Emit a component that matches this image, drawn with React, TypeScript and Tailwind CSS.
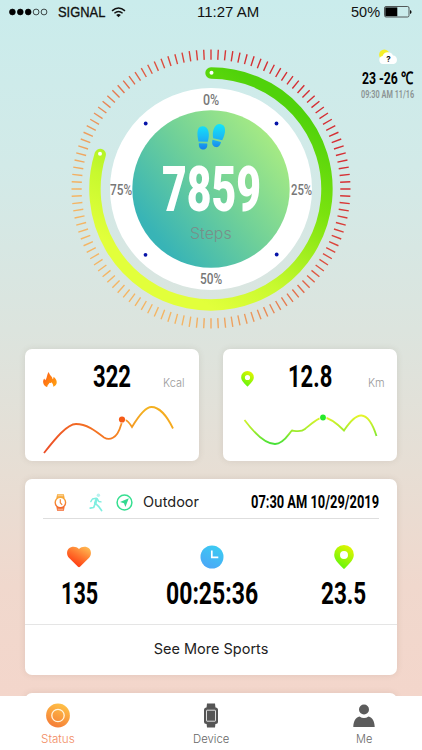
import { useLayoutEffect, useRef } from "react";
import type { ReactNode } from "react";

/** One line of text squeezed or stretched horizontally to a given width. */
function Fit({ width, className = "", children }: { width: number; className?: string; children: ReactNode }) {
  const ref = useRef<HTMLSpanElement>(null);
  useLayoutEffect(() => {
    const el = ref.current;
    if (el) el.style.transform = `scaleX(${width / el.offsetWidth})`;
  });
  return (
    <span className={`block leading-none whitespace-nowrap ${className}`} style={{ width }}>
      <span ref={ref} className="inline-block origin-left">
        {children}
      </span>
    </span>
  );
}

const din = "font-['Roboto',sans-serif]";
const sans = "font-['Inter',sans-serif]";

function StatusBar() {
  return (
    <header className="grid h-6 grid-cols-3 items-center pr-[10px] pl-[9px] font-['Liberation_Sans',sans-serif] text-[#111]">
      <div className="flex items-center">
        <svg width="39" height="8" viewBox="0 0 39 8" stroke="#000" strokeWidth="0.7">
          {[0, 1, 2, 3, 4].map((i) => (
            <circle key={i} cx={3.4 + i * 7.9} cy="4" r="2.9" fill={i < 3 ? "#000" : "none"} />
          ))}
        </svg>
        <Fit width={47} className="ml-[10px] text-[14px] [-webkit-text-stroke:0.3px]">SIGNAL</Fit>
        <svg className="ml-[6px]" width="15" height="11" viewBox="0 0 15 11" fill="none" stroke="#111" strokeWidth="1.4">
          <path d="M1 3.9Q7.5 -1.8 14 3.9" />
          <path d="M3.4 6.2Q7.5 2.7 11.6 6.2" />
          <path d="M5.2 8Q7.5 6 9.8 8L7.5 10.2Z" fill="#111" stroke="none" />
        </svg>
      </div>
      <div className="flex justify-center">
        <Fit width={62} className="ml-[36px] text-[14px]">11:27 AM</Fit>
      </div>
      <div className="flex items-center justify-end gap-[4px]">
        <Fit width={29} className="text-[14px]">50%</Fit>
        <svg width="28" height="12" viewBox="0 0 28 12">
          <rect x="0.5" y="0.5" width="24.5" height="10.5" rx="1.5" fill="none" stroke="#333" strokeWidth="0.8" />
          <rect x="1.3" y="1.4" width="12" height="8.8" fill="#000" />
          <path d="M26 4v4q1.6-.6 1.6-2T26 4Z" fill="#111" />
        </svg>
      </div>
    </header>
  );
}

function Weather() {
  return (
    <div className="absolute top-[49px] left-[361px] flex flex-col items-center">
      <svg width="20" height="16" viewBox="0 0 20 16">
        <circle cx="6.3" cy="5.7" r="5.2" fill="#f5ef28" />
        <path d="M5 15a4 4 0 0 1-.5-7.900A5.700 5.700 0 0 1 15 6.500 4.300 4.300 0 0 1 15.500 15Z" fill="#fff" />
        <text x="10.500" y="13.200" textAnchor="middle" fontSize="8" fontWeight="700" fontFamily="Inter" fill="#111">?</text>
      </svg>
      <Fit width={51} className={`${din} mt-[5px] text-[17px] font-bold text-black`}>23 -26 ℃</Fit>
      <Fit width={53} className={`${din} mt-[3px] text-[10.500px] font-semibold text-[#8a9292]`}>09:30 AM 11/16</Fit>
    </div>
  );
}

function Dial() {
  const ticks = Array.from({ length: 120 }, (_, i) => {
    const a = (i * 3 * Math.PI) / 180;
    const s = Math.sin(a);
    const c = Math.cos(a);
    return `M${(141 + 129.3 * s).toFixed(2)} ${(141 - 129.3 * c).toFixed(2)}L${(141 + 139.5 * s).toFixed(2)} ${(141 - 139.5 * c).toFixed(2)}`;
  }).join("");
  return (
    <section className="relative mt-[24px] ml-[70px] h-[282px] w-[282px]">
      <svg className="block" width="282" height="282" viewBox="0 0 282 282">
        <defs>
          <linearGradient id="tick" gradientUnits="userSpaceOnUse" x1="230" y1="70" x2="60" y2="210">
            <stop offset="0" stopColor="#d52f34" />
            <stop offset="0.3" stopColor="#dc493d" />
            <stop offset="0.75" stopColor="#eb995d" />
            <stop offset="1" stopColor="#f4b564" />
          </linearGradient>
          <linearGradient id="arc" gradientUnits="userSpaceOnUse" x1="225" y1="60" x2="110" y2="240">
            <stop offset="0" stopColor="#50d20a" />
            <stop offset="0.35" stopColor="#7be30f" />
            <stop offset="0.75" stopColor="#c7f92e" />
            <stop offset="1" stopColor="#e2ff3b" />
          </linearGradient>
          <linearGradient id="disc" x1="0.9" y1="0.2" x2="0.15" y2="0.8">
            <stop offset="0" stopColor="#a5ea84" />
            <stop offset="0.5" stopColor="#6fd099" />
            <stop offset="1" stopColor="#38b4b6" />
          </linearGradient>
          <linearGradient id="foot" gradientUnits="userSpaceOnUse" x1="0" y1="76" x2="0" y2="101">
            <stop offset="0" stopColor="#12e6f8" />
            <stop offset="0.6" stopColor="#1cb4f5" />
            <stop offset="1" stopColor="#1681ea" />
          </linearGradient>
        </defs>
        <path d={ticks} stroke="url(#tick)" strokeWidth="1.4" />
        <path d="M141 25A116 116 0 1 1 30.200 106.500" fill="none" stroke="url(#arc)" strokeWidth="11.400" strokeLinecap="round" />
        <circle cx="141.500" cy="24.800" r="2" fill="#fff" />
        <circle cx="30" cy="105.800" r="2" fill="#fff" />
        <circle cx="141" cy="141" r="101" fill="#fff" />
        <circle cx="141" cy="141" r="78.700" fill="url(#disc)" />
        {[[75.7, 75.5], [206.500, 75.500], [75.500, 206.800], [206.700, 206.500]].map(([x, y]) => (
          <circle key={`${x}-${y}`} cx={x} cy={y} r="1.900" fill="#0714a8" />
        ))}
        <g fill="url(#foot)">
          <path d="M128.500 93.500C127 87 126.200 78.500 132.300 78.300C138.500 78.100 140.300 86 137.700 93.800Z" />
          <path d="M128.900 95.200L137.200 95.500C137.800 99 136.200 101.500 133.200 101.500C129.900 101.500 128.500 98.800 128.900 95.200Z" />
          <path d="M143.200 90.300C141.600 83.500 144.500 75.400 150.200 76C156.600 76.800 156 85 152.200 92.200Z" />
          <path d="M142.500 91.800L151 94.100C150.200 98 148.200 99.800 145.700 99.100C142.200 98.200 141.600 95.500 142.500 91.800Z" />
        </g>
      </svg>
      <div className={`${din} absolute inset-0 text-[14px] font-medium text-[#777]`}>
        <Fit width={16} className="absolute top-[45px] left-[133px]">0%</Fit>
        <Fit width={21} className="absolute top-[134.500px] left-[220.500px]">25%</Fit>
        <Fit width={22} className="absolute top-[224px] left-[130px]">50%</Fit>
        <Fit width={22} className="absolute top-[134.500px] left-[40px]">75%</Fit>
      </div>
      <div className="absolute inset-x-0 top-[110px] flex flex-col items-center">
        <Fit width={99} className={`${din} text-[63px] font-black text-white`}>7859</Fit>
        <Fit width={42} className={`${sans} mt-[5px] text-[15.500px] font-light text-[#78908a]`}>Steps</Fit>
      </div>
    </section>
  );
}

function Pin({ className = "", id }: { className?: string; id: string }) {
  return (
    <svg className={className} viewBox="0 0 20 24">
      <defs>
        <linearGradient id={id} x1="0.8" y1="0" x2="0.3" y2="1">
          <stop offset="0" stopColor="#e8f500" />
          <stop offset="1" stopColor="#5df60c" />
        </linearGradient>
      </defs>
      <path fillRule="evenodd" fill={`url(#${id})`} d="M10 0A9.800 9.800 0 0 0 .2 9.800C.2 14 3 17.400 9.300 23.600Q10 24.200 10.700 23.600C17 17.400 19.800 14 19.800 9.800A9.800 9.800 0 0 0 10 0ZM10 6A4 4 0 1 1 10 14A4 4 0 0 1 10 6Z" />
    </svg>
  );
}

const card = "rounded-[7px] bg-white shadow-[0_0_6px_rgba(90,70,60,0.12)]";

function Metrics() {
  return (
    <section className="mt-[19px] flex justify-between px-[25px]">
      <article className={`${card} h-[112px] w-[174px]`}>
        <div className="flex h-[51px] pt-[11px]">
          <svg className="mt-[12px] ml-[18px]" width="14" height="15" viewBox="0 0 14 15">
            <defs>
              <linearGradient id="flame" x1="0" y1="0" x2="1" y2="0.700">
                <stop offset="0" stopColor="#ff5a14" />
                <stop offset="1" stopColor="#ff9c12" />
              </linearGradient>
            </defs>
            <path fill="url(#flame)" d="M3.200 14.700C-.4 12.500-.6 8.700 1.200 6.500C1.800 7.300 2 7.700 2.100 8.300C4.400 6.200 3.600 2.600 5.800 0C6.200 3.300 9.500 4 9.600 7.300C10.400 6.700 10.600 5.800 10.500 4.800C15.200 8.500 14.500 13 10.200 14.800C10.500 12.500 9.500 12 8.700 10.300C8 11.400 7.200 11.200 6.400 10.700C6.100 12.400 4.500 12.200 4.200 15Z" />
          </svg>
          <Fit width={38} className={`${din} ml-[36px] text-[32px] font-bold text-black`}>322</Fit>
          <Fit width={22} className={`${sans} mt-[18px] ml-[32px] text-[11px] font-light text-[#999]`}>Kcal</Fit>
        </div>
        <svg className="block" width="174" height="61" viewBox="0 0 174 61" fill="none">
          <defs>
            <linearGradient id="kcal" gradientUnits="userSpaceOnUse" x1="18" y1="52" x2="150" y2="8">
              <stop offset="0" stopColor="#ec4d27" />
              <stop offset="0.500" stopColor="#f57c22" />
              <stop offset="0.800" stopColor="#f3b321" />
              <stop offset="1" stopColor="#f5a51d" />
            </linearGradient>
          </defs>
          <path d="M19 53C30 39 42 24 51 24C63 24 73 33 79 37.500C84 40.500 92 39.500 96 25C98 17 102 19 107 27C113 17 120 7 126.500 7C134 7 142 16 148 28.500" stroke="url(#kcal)" strokeWidth="1.800" />
          <circle cx="97" cy="19.500" r="3.800" fill="#fff" />
          <circle cx="97" cy="19.500" r="3.100" fill="#f65a16" />
        </svg>
      </article>
      <article className={`${card} h-[112px] w-[174px]`}>
        <div className="flex h-[51px] pt-[11px]">
          <Pin id="pinSmall" className="mt-[11px] ml-[18px] h-[15.500px] w-[13px]" />
          <Fit width={44} className={`${din} ml-[33.500px] text-[32px] font-bold text-black`}>12.8</Fit>
          <Fit width={17} className={`${sans} mt-[18px] ml-[36.500px] text-[11px] font-light text-[#999]`}>Km</Fit>
        </div>
        <svg className="block" width="174" height="61" viewBox="0 0 174 61" fill="none">
          <defs>
            <linearGradient id="km" gradientUnits="userSpaceOnUse" x1="0" y1="15" x2="0" y2="45">
              <stop offset="0" stopColor="#e8f52a" />
              <stop offset="0.500" stopColor="#a5ec2c" />
              <stop offset="1" stopColor="#3fe038" />
            </linearGradient>
          </defs>
          <path d="M21.500 20C32 34 43 44 52 44C61 44 66 33 69 30.500C73 31 78 32.500 82 29C88 24 95 17.500 100 17.500C106 17.500 113 22.500 121 30.500C126 23 132 15 138.500 15.500C145 16 150 25 153.500 36" stroke="url(#km)" strokeWidth="1.800" />
          <circle cx="100" cy="17.500" r="3.600" fill="#fff" />
          <circle cx="100" cy="17.500" r="2.900" fill="#25e92a" />
        </svg>
      </article>
    </section>
  );
}

function Sports() {
  return (
    <section className={`${card} mx-[25px] mt-[18px] h-[195.500px]`}>
      <div className="mx-[18px] flex h-[40px] items-center border-b border-[#dedede] pt-[7px]">
        <svg className="ml-[11px]" width="13" height="17" viewBox="0 0 13 17" fill="none">
          <defs>
            <linearGradient id="watch" x1="0" y1="0" x2="0" y2="1">
              <stop offset="0" stopColor="#f7ad38" />
              <stop offset="1" stopColor="#f3652c" />
            </linearGradient>
          </defs>
          <path fill="url(#watch)" d="M3.100.3H9.900L10.600 4H2.400ZM2.400 13H10.600L9.900 16.700H3.100Z" />
          <path stroke="#fff" strokeWidth=".6" d="M3.600 1.800H9.400M3.600 15.200H9.400" />
          <circle cx="6.400" cy="8.500" r="5.200" fill="#fff" stroke="url(#watch)" strokeWidth="1.400" />
          <path stroke="#f5893a" strokeWidth="1.200" d="M6.300 5.300V8.700L8.200 10.800" />
        </svg>
        <svg className="ml-[22px]" width="14" height="19" viewBox="0 0 14 19" fill="none" stroke="#7eeee0" strokeLinecap="round" strokeLinejoin="round">
          <circle cx="9.400" cy="2.300" r="1.700" fill="#b8f1ef" stroke="none" />
          <path strokeWidth="2.600" d="M7.700 6L6.200 10.300" />
          <path strokeWidth="1.400" d="M7.200 5.200L3.400 6L1.800 8.600M8.500 6.200L9.800 8.500L12 8.900" />
          <path strokeWidth="1.700" d="M6.500 10.500L9.500 13.300L12.600 17.500M6 11L4.700 14.500L1.200 15.100" />
        </svg>
        <svg className="ml-[13px]" width="17" height="17" viewBox="0 0 17 17">
          <circle cx="8.500" cy="8.500" r="7.400" fill="none" stroke="#36df91" strokeWidth="1.500" />
          <path fill="#32d990" d="M12.800 4.200L9.400 13L8 9.300L4 8Z" />
        </svg>
        <Fit width={56} className={`${sans} ml-[10px] text-[14.500px] font-normal text-[#222]`}>Outdoor</Fit>
        <Fit width={128} className={`${din} ml-auto text-[18px] font-bold text-black`}>07:30 AM 10/29/2019</Fit>
      </div>
      <div className="flex justify-between pt-[25.500px] pr-[31px] pl-[35px]">
        <div className="flex w-[38px] flex-col items-center">
          <svg className="h-[24px]" width="24" height="21" viewBox="0 0 24 21">
            <defs>
              <linearGradient id="heart" x1="0.850" y1="0.100" x2="0.300" y2="0.900">
                <stop offset="0" stopColor="#ffb14d" />
                <stop offset="0.500" stopColor="#ff742d" />
                <stop offset="1" stopColor="#ff3c12" />
              </linearGradient>
            </defs>
            <path fill="url(#heart)" d="M12 2.500C9.200-.3 4.500-.3 1.800 2C-.6 4.500-.5 8.600 1.900 11.200L11 20.300Q12 21.200 13 20.300L22.100 11.200C24.500 8.600 24.600 4.500 22.200 2C19.500-.3 14.800-.3 12 2.500Z" />
          </svg>
          <Fit width={37} className={`${din} mt-[9px] text-[31.500px] font-bold text-black`}>135</Fit>
        </div>
        <div className="ml-[4px] flex w-[92px] flex-col items-center">
          <svg width="24" height="24" viewBox="0 0 24 24">
            <defs>
              <linearGradient id="clock" x1="0.800" y1="0" x2="0.300" y2="1">
                <stop offset="0" stopColor="#3bcdf2" />
                <stop offset="1" stopColor="#4ba7f7" />
              </linearGradient>
            </defs>
            <circle cx="12" cy="12" r="11.500" fill="url(#clock)" />
            <path d="M11.800 5.500V12.300H18.300" fill="none" stroke="#fff" strokeWidth="1.700" />
          </svg>
          <Fit width={92} className={`${din} mt-[9px] text-[31.500px] font-bold text-black`}>00:25:36</Fit>
        </div>
        <div className="flex w-[45px] flex-col items-center">
          <Pin id="pinLarge" className="h-[24px] w-[20px]" />
          <Fit width={45} className={`${din} mt-[9px] text-[31.500px] font-bold text-black`}>23.5</Fit>
        </div>
      </div>
      <button className="mt-[15px] flex h-[49px] w-full items-center justify-center border-t border-[#e5e5e5]">
        <Fit width={115} className={`${sans} text-[14.500px] font-normal text-[#222]`}>See More Sports</Fit>
      </button>
    </section>
  );
}

function TabBar() {
  return (
    <nav className={`${sans} absolute inset-x-0 bottom-0 flex h-[54px] justify-between bg-white pt-[7px] pr-[36px] pl-[41px] text-[11px] font-light text-[#666]`}>
      <a className="flex w-[34px] flex-col items-center text-[#f28b62]">
        <svg width="24" height="25" viewBox="0 0 24 25">
          <defs>
            <linearGradient id="status" x1="0.700" y1="0" x2="0.300" y2="1">
              <stop offset="0" stopColor="#ffc247" />
              <stop offset="1" stopColor="#f47b37" />
            </linearGradient>
          </defs>
          <circle cx="12" cy="12.500" r="11.900" fill="url(#status)" />
          <circle cx="12" cy="12.500" r="6.200" fill="none" stroke="#fff5e0" strokeWidth="1.300" />
        </svg>
        <Fit width={34} className="mt-[6px]">Status</Fit>
      </a>
      <a className="ml-[5px] flex w-[36px] flex-col items-center">
        <svg width="14" height="25" viewBox="0 0 14 25">
          <path fill="#555" d="M3 .5H11L11.500 5H2.500ZM2.500 20H11.500L11 24.500H3Z" />
          <rect x="0" y="4.500" width="14" height="16.500" rx="2.500" fill="#555" />
          <rect x="2.500" y="7.200" width="9" height="11" rx=".5" fill="#555" stroke="#eee" strokeWidth=".9" />
        </svg>
        <Fit width={36} className="mt-[6px]">Device</Fit>
      </a>
      <a className="flex w-[44px] flex-col items-center">
        <svg width="22" height="25" viewBox="0 0 22 25" fill="#5c5c5c">
          <circle cx="11" cy="6.500" r="5" />
          <path d="M.3 24C.4 18.500 2.500 14.500 6.500 13.500Q11 16.500 15.500 13.500C19.500 14.500 21.600 18.500 21.700 24Z" />
        </svg>
        <Fit width={16} className="mt-[6px]">Me</Fit>
      </a>
    </nav>
  );
}

export default function App() {
  return (
    <main className="relative h-[750px] w-[422px] overflow-hidden bg-[linear-gradient(180deg,#caecec_0%,#d2eae8_22%,#dce4de_44%,#e7ded4_63%,#f0d8cd_78%,#f5d5ca_100%)]">
      <StatusBar />
      <Weather />
      <Dial />
      <Metrics />
      <Sports />
      <div className={`${card} mx-[25px] mt-[18px] h-[60px]`} />
      <TabBar />
    </main>
  );
}
